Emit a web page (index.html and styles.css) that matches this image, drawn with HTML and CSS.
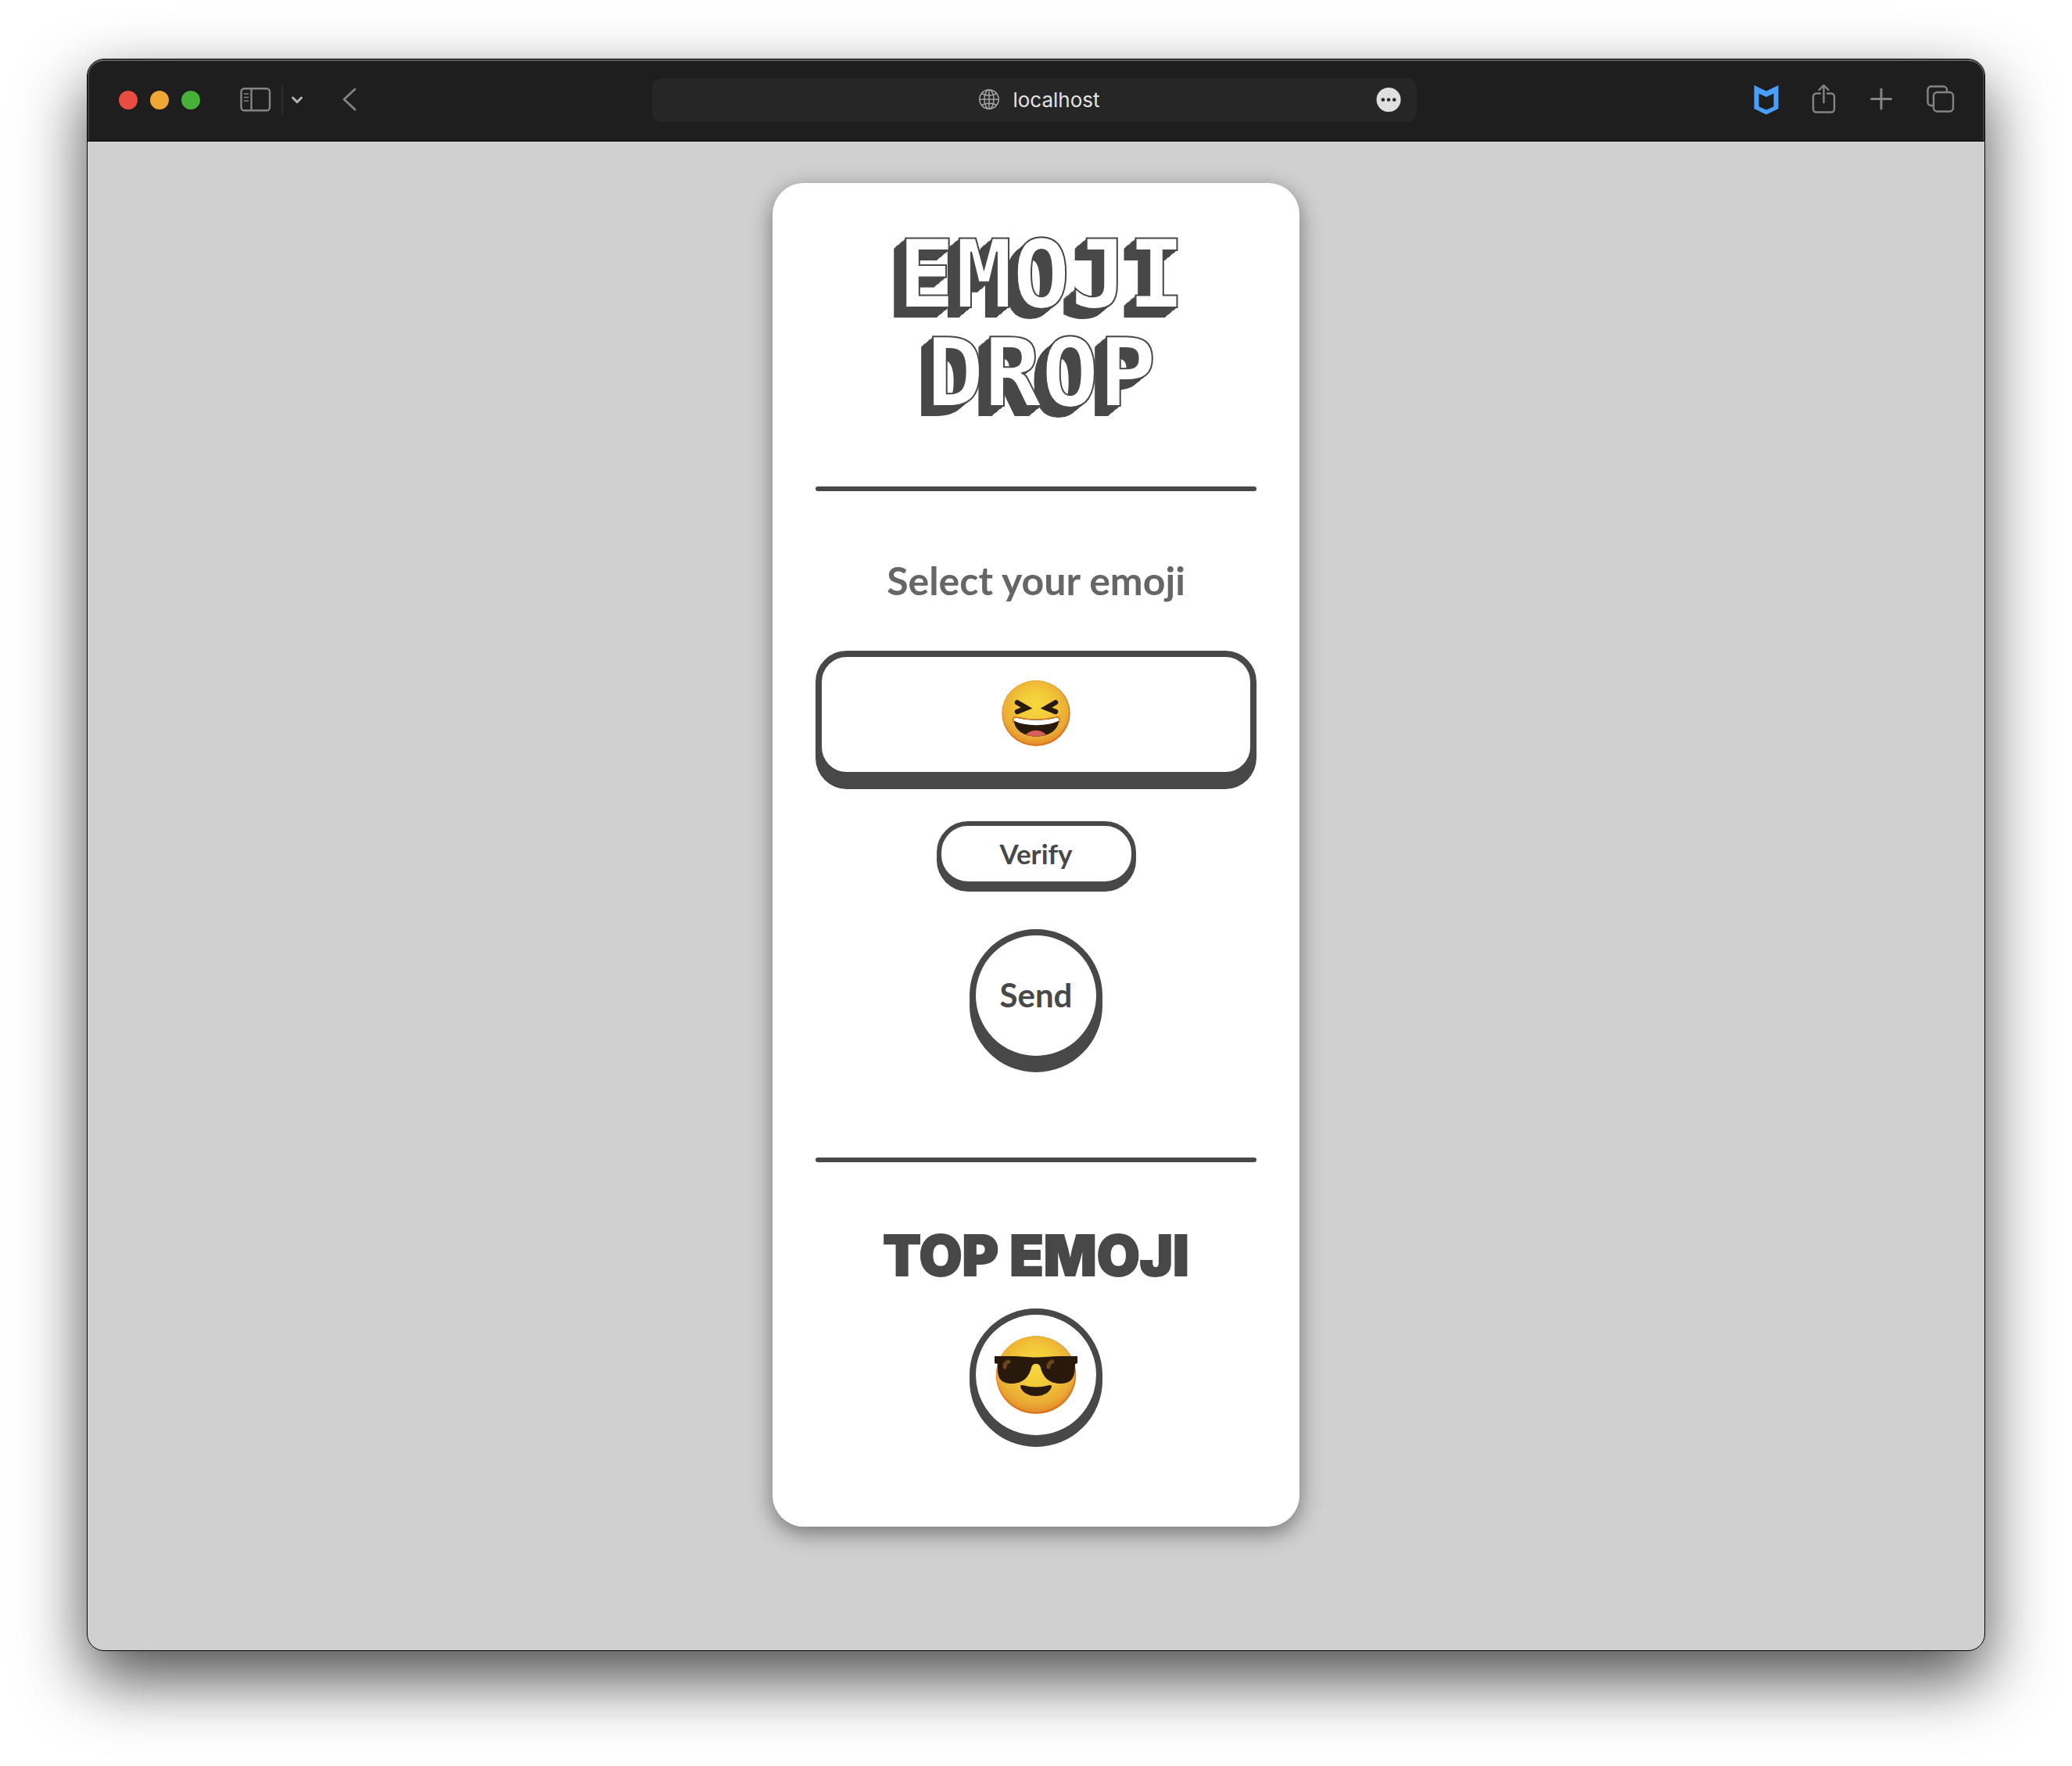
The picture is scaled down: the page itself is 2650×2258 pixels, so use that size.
FILE: index.html
```html
<!DOCTYPE html>
<html lang="en">
<head>
<meta charset="utf-8">
<title>Emoji Drop</title>
<link rel="stylesheet" href="styles.css">
</head>
<body>
<div class="window">
  <header class="toolbar">
    <div class="group start">
      <div class="lights">
        <button class="light close" aria-label="Close"></button>
        <button class="light minimise" aria-label="Minimise"></button>
        <button class="light expand" aria-label="Full screen"></button>
      </div>
      <button class="tool sidebar" aria-label="Sidebar">
        <svg width="40" height="32" viewBox="0 0 40 32" fill="none" stroke="#848484" stroke-width="2.400"><rect x="1.500" y="1.200" width="36.500" height="28" rx="4"/><path d="M14.500 1.200v28"/><path d="M5.500 8h5M5.500 12.500h5M5.500 17h5" stroke-linecap="round" stroke-width="1.600"/></svg>
      </button>
      <span class="divider"></span>
      <button class="tool menu" aria-label="Sidebar options">
        <svg width="16" height="12" viewBox="0 0 16 12" fill="none" stroke="#b4b4b4" stroke-width="3" stroke-linecap="round" stroke-linejoin="round"><path d="M2.500 3l5.500 5.500L13.500 3"/></svg>
      </button>
      <button class="tool back" aria-label="Back">
        <svg width="20" height="32" viewBox="0 0 20 32" fill="none" stroke="#848484" stroke-width="2.800" stroke-linecap="round" stroke-linejoin="round"><path d="M17 2L3 15l14 13"/></svg>
      </button>
    </div>
    <div class="address">
      <span class="site">
        <svg width="28" height="28" viewBox="0 0 28 28" fill="none" stroke="#a0a0a0" stroke-width="1.600"><circle cx="14" cy="13" r="12.200"/><ellipse cx="14" cy="13" rx="6" ry="12.200"/><path d="M14 .8v24.400M1.800 13h24.400M4.500 5.500c5 3.200 14 3.200 19 0M4.500 20.500c5-3.200 14-3.200 19 0"/></svg>
        localhost
      </span>
      <button class="more" aria-label="Page menu">
        <svg width="32" height="32" viewBox="0 0 32 32"><circle cx="16" cy="15.500" r="15.500" fill="#dfdfdf"/><g fill="#262626"><circle cx="8.800" cy="15.500" r="2.300"/><circle cx="16" cy="15.500" r="2.300"/><circle cx="23.200" cy="15.500" r="2.300"/></g></svg>
      </button>
    </div>
    <div class="group end">
      <button class="tool" aria-label="Web protection">
        <svg width="40" height="40" viewBox="0 0 40 40"><path fill="#4a9eff" fill-rule="evenodd" d="M3.500 1L19 8.500 34.500 1v30L19 38.500 3.500 31zM9.500 11.500v16.700L19 32.500l9.500-4.300V11.500L19 16z"/></svg>
      </button>
      <button class="tool" aria-label="Share">
        <svg width="40" height="40" viewBox="0 0 40 40" fill="none" stroke="#848484" stroke-width="2.400" stroke-linecap="round" stroke-linejoin="round"><path d="M14 11.500h-5a4 4 0 0 0-4 4v16a4 4 0 0 0 4 4h19a4 4 0 0 0 4-4v-16a4 4 0 0 0-4-4h-5M18.500 23V1.500M12.500 7l6-6 6 6"/></svg>
      </button>
      <button class="tool" aria-label="New tab">
        <svg width="40" height="40" viewBox="0 0 40 40" fill="none" stroke="#848484" stroke-width="3" stroke-linecap="round"><path d="M18 6v25M5.500 18.500h25"/></svg>
      </button>
      <button class="tool" aria-label="Tab overview">
        <svg width="40" height="40" viewBox="0 0 40 40" fill="none" stroke="#848484" stroke-width="2.400"><rect x="11" y="10" width="25" height="24.500" rx="4.500"/><path d="M11 27H8a4.500 4.500 0 0 1-4.500-4.500v-16A4.500 4.500 0 0 1 8 2.500h15.500A4.500 4.500 0 0 1 28 7v3"/></svg>
      </button>
    </div>
  </header>
  <main class="page">
    <section class="card">
      <h1 class="title">EMOJI<br>DROP</h1>
      <hr class="rule">
      <h2 class="prompt">Select your emoji</h2>
      <button class="key picker" aria-label="Selected emoji: laughing">
        <svg width="88" height="84" viewBox="0 0 88 84">
          <defs>
            <radialGradient id="skin" cx=".5" cy=".4" r=".58"><stop offset="0" stop-color="#f7d83d"/><stop offset=".4" stop-color="#f3cb39"/><stop offset=".85" stop-color="#eaab34"/><stop offset="1" stop-color="#e5932c"/></radialGradient>
          </defs>
          <ellipse cx="44" cy="42" rx="43.700" ry="42" fill="#d9741f"/>
          <ellipse cx="43.500" cy="41" rx="42.700" ry="40.800" fill="url(#skin)"/>
          <path d="M20 28.200L32 35.200 20 40M69 28.200L57 35.200 69 40" fill="none" stroke="#28190c" stroke-width="6.500" stroke-linecap="round" stroke-miterlimit="8"/>
          <path d="M15.500 51c0-4 2-4.500 5-3.500 15 3.500 33 3.500 48 0 3-1 5-.5 5 3.500-1.500 13-13 20.500-29 20.500S17 64 15.500 51z" fill="#28190c"/>
          <path d="M31 69.500c5-7.500 21-7.500 26 0-8 2.600-18 2.600-26 0z" fill="#d35f57"/>
          <path d="M15.500 51.500c0-4 2-4.500 5-3.500 15 3.500 33 3.500 48 0 3-1 5-.5 5 3.500-15 7.500-43 7.500-58 0z" fill="#fff"/>
          <path d="M15 54c-1.500-7 1.500-8 5.500-6.800 15 3.500 33 3.500 48 0 4-1.200 7-.2 5.500 6.800" fill="none" stroke="#d9741f" stroke-width="1.400"/>
        </svg>
      </button>
      <button class="key verify">Verify</button>
      <button class="key round send">Send</button>
      <hr class="rule">
      <h2 class="heading">TOP EMOJI</h2>
      <div class="key round top" role="img" aria-label="Sunglasses emoji">
        <svg width="106" height="100" viewBox="0 0 106 100">
          <ellipse cx="53" cy="50" rx="51.200" ry="49.800" fill="#d9741f"/>
          <ellipse cx="52.500" cy="48.800" rx="50.200" ry="48.400" fill="url(#skin)"/>
          <path d="M0 26h22c12 0 20 1.500 31 1.500S73 26 84 26h22v9l-3 1c0 16-3 25-19 25-15 0-22-9-25-20-1-7-11-7-12 0-3 11-10 20-25 20C6 61 3 52 4 36l-4-1z" fill="#28190c"/>
          <path d="M13 40c0-4 1.500-6 5-7M69 40c0-4 1.500-6 5-7" fill="none" stroke="#6b451c" stroke-width="5" stroke-linecap="round"/>
          <path d="M33 65c0-3 3-2 5-1.500 9 2.500 21 2.500 30 0 2-.5 5-1.500 5 1.500-2 7-10 12-20 12s-18-5-20-12z" fill="#28190c"/>
        </svg>
      </div>
    </section>
  </main>
</div>
</body>
</html>
```
FILE: styles.css
```css
:root {
  --ink: #484848;
}

* {
  box-sizing: border-box;
}

body {
  display: flex;
  min-height: 100vh;
  margin: 0;
  padding: 75px 111px 147px;
  background: #fff;
  color: var(--ink);
  font-family: Lato, "Open Sans", sans-serif;
}

button {
  padding: 0;
  border: 0;
  background: none;
  color: inherit;
  font: inherit;
}

svg {
  display: block;
}

.window {
  display: flex;
  flex: 1;
  flex-direction: column;
  overflow: hidden;
  border: 1px solid #000;
  border-radius: 22px;
  background: #d0d0d0;
  box-shadow: 0 36px 84px rgba(0, 0, 0, 0.7);
}

.toolbar {
  display: grid;
  grid-template-columns: 1fr minmax(0, 978px) 1fr;
  align-items: center;
  height: 105px;
  padding: 0 36px 0 32px;
  border-bottom: 1px solid #000;
  border-radius: 21px 21px 0 0;
  background: #1e1e1e;
  box-shadow: inset 0 2px 0 #5c5c5c, inset 2px 0 0 #3c3c3c, inset -2px 0 0 #3c3c3c;
}

.group {
  display: flex;
  align-items: center;
}

.start {
  padding-left: 8px;
}

.end {
  justify-content: flex-end;
  gap: 34px;
}

.lights {
  display: flex;
  gap: 16px;
}

.light {
  width: 24px;
  height: 24px;
  border-radius: 50%;
}

.close { background: #e84d42; }
.minimise { background: #f0a733; }
.expand { background: #46b038; }

.sidebar {
  margin-left: 51px;
}

.divider {
  width: 2px;
  height: 36px;
  margin: 0 10px 0 13px;
  background: #2e2e2e;
}

.back {
  margin-left: 49px;
}

.address {
  display: grid;
  grid-template-columns: 1fr auto 1fr;
  align-items: center;
  height: 56px;
  padding: 0 20px;
  border-radius: 12px;
  background: #262626;
}

.site {
  display: flex;
  grid-column: 2;
  align-items: center;
  padding-left: 12px;
  gap: 16px;
  color: #e2e2e2;
  font: 26px/32px Inter, sans-serif;
}

.more {
  justify-self: end;
}

.page {
  display: flex;
  flex: 1;
  align-items: flex-start;
  justify-content: center;
  padding: 53px 24px;
}

.card {
  display: flex;
  flex-direction: column;
  align-items: center;
  width: 100%;
  max-width: 674px;
  padding: 54px 55px 109px;
  border-radius: 40px;
  background: #fff;
  box-shadow: 0 8px 28px rgba(0, 0, 0, 0.45);
}

.title {
  margin: 0 0 82px;
  padding-left: 14px;
  color: #fff;
  font: bold 122px/126px "DejaVu Sans Mono", monospace;
  -webkit-text-stroke: 2px var(--ink);
  text-align: center;
  text-shadow:
    -1px 1px var(--ink), -2px 2px var(--ink), -3px 3px var(--ink),
    -4px 4px var(--ink), -5px 4px var(--ink), -6px 5px var(--ink),
    -7px 6px var(--ink), -8px 7px var(--ink), -9px 8px var(--ink),
    -10px 9px var(--ink), -11px 9px var(--ink), -12px 10px var(--ink),
    -13px 11px var(--ink), -14px 12px var(--ink), -15px 13px var(--ink);
}

.rule {
  width: 100%;
  height: 6px;
  margin: 0;
  border: 0;
  border-radius: 3px;
  background: var(--ink);
}

.prompt {
  margin: 84px 0 60px;
  color: #666;
  font-size: 50px;
  font-weight: bold;
  line-height: 60px;
}

.key {
  display: flex;
  align-items: center;
  justify-content: center;
  border: 8px solid var(--ink);
  border-radius: 40px;
  background: #fff;
  font-weight: bold;
}

.picker {
  width: 100%;
  height: 163px;
  padding-bottom: 3px;
  box-shadow: 0 14px var(--ink);
}

.verify {
  width: 255px;
  height: 83px;
  margin: 55px 0;
  padding-bottom: 2px;
  border-width: 6px;
  box-shadow: 0 7px var(--ink);
  font-size: 35px;
}

.round {
  width: 170px;
  height: 170px;
  border-radius: 50%;
}

.send {
  margin-bottom: 122px;
  padding-bottom: 2px;
  box-shadow: 0 13px var(--ink);
  font-size: 42px;
}

.heading {
  margin: 82px 0 31px;
  font: 900 71px/74px Inter, sans-serif;
  -webkit-text-stroke: 2px var(--ink);
}

.top {
  box-shadow: 0 7px var(--ink);
}
```
